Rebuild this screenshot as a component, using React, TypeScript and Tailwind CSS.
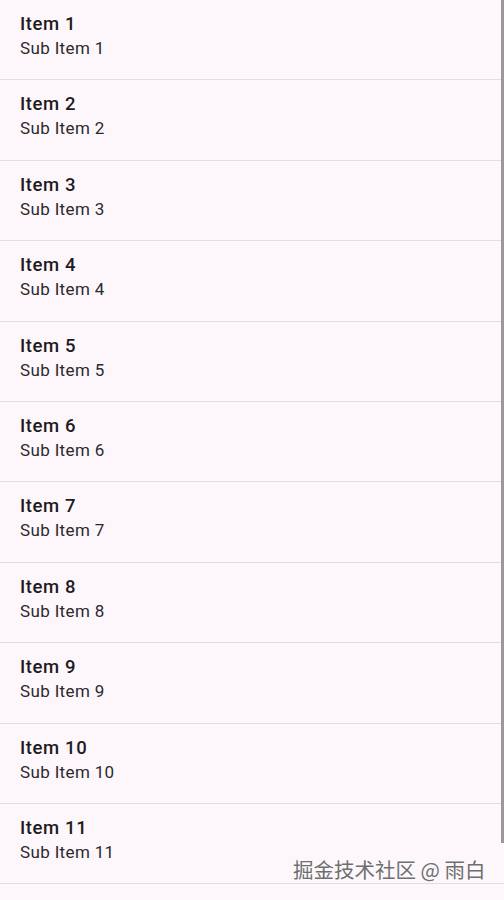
export default function App() {
  const items = Array.from({ length: 11 }, (_, i) => i + 1);
  return (
    <div
      className="relative w-[504px] h-[900px] overflow-hidden bg-[#fdf7fc]"
      style={{ fontFamily: "Roboto, 'Noto Sans', sans-serif" }}
    >
      <div className="flex flex-col">
        {items.map((n) => (
          <div
            key={n}
            className="h-[80.4px] shrink-0 border-b border-[#e2dde1] px-5 pt-[12px] flex flex-col"
          >
            <div className="text-[18.5px] leading-6 font-medium tracking-[0.6px] text-[#1d1b20]">
              Item {n}
            </div>
            <div className="text-[17px] leading-[24px] tracking-[0.35px] text-[#2b292e]">
              Sub Item {n}
            </div>
          </div>
        ))}
      </div>
      <div className="absolute right-0 top-0 w-[3px] h-[843px] bg-[#9b979b]" />
      <div
        className="absolute left-[293px] top-[857px] text-[20.5px] leading-6 text-[#6e6e6e]"
        style={{
          fontFamily: "'Noto Sans CJK SC', 'Noto Sans', sans-serif",
          textShadow: "0 0 1px #fff, 0 0 1px #fff",
        }}
      >
        掘金技术社区 @ 雨白
      </div>
    </div>
  );
}
